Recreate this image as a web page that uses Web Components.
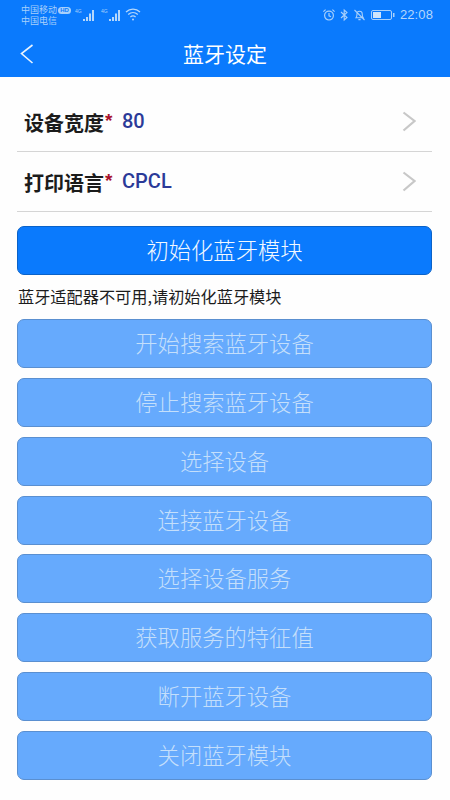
<!DOCTYPE html>
<html lang="zh"><head><meta charset="utf-8">
<style>
html,body{margin:0;padding:0;background:#fefefe;}
body{width:450px;height:800px;overflow:hidden;font-family:"Noto Sans CJK SC","Liberation Sans",sans-serif;}
</style></head><body>
<app-page>
  <app-header title-text="蓝牙设定"></app-header>
  <main-body>
    <form-row label="设备宽度" value="80"></form-row>
    <form-row label="打印语言" value="CPCL"></form-row>
    <action-button primary>初始化蓝牙模块</action-button>
    <status-note>蓝牙适配器不可用,请初始化蓝牙模块</status-note>
    <action-button>开始搜索蓝牙设备</action-button>
    <action-button>停止搜索蓝牙设备</action-button>
    <action-button>选择设备</action-button>
    <action-button>连接蓝牙设备</action-button>
    <action-button>选择设备服务</action-button>
    <action-button>获取服务的特征值</action-button>
    <action-button>断开蓝牙设备</action-button>
    <action-button>关闭蓝牙模块</action-button>
  </main-body>
</app-page>
<script>
function def(name, html, setup){
  customElements.define(name, class extends HTMLElement{
    constructor(){super();this.attachShadow({mode:'open'}).innerHTML=html;}
    connectedCallback(){ if(setup) setup(this,this.shadowRoot); }
  });
}
const bars=`<g fill="#b5d7fb"><rect x="8" y="12" width="2" height="2"/><rect x="11" y="10" width="2" height="4"/><rect x="14" y="6.500" width="2" height="7.500"/><rect x="17" y="3" width="2" height="11"/></g>`;
def('app-page',`<style>:host{display:flex;flex-direction:column;width:450px;height:800px}</style><slot></slot>`);
def('main-body',`<style>:host{display:flex;flex-direction:column;padding:15px 18px 0 17px}</style><slot></slot>`);
def('app-header',`<style>
:host{display:flex;flex-direction:column;height:77px;background:#0a7afd;color:#fff;flex:none}
.status{height:28px;display:flex;align-items:flex-start;justify-content:space-between;padding:3px 17px 0 21px;color:#a8d0fb;font-size:9px;line-height:11px;box-sizing:border-box}
.left,.right{display:flex;align-items:center}
.carrier{display:flex;flex-direction:column;width:37px;padding-top:2px;white-space:nowrap;font-family:"Liberation Sans","Noto Sans CJK SC",sans-serif}
.hd{font:bold 6px/7px "Liberation Sans",sans-serif;background:#a8d0fb;color:#0a7afd;border-radius:4px;height:7px;width:13px;text-align:center;align-self:flex-start;margin-top:4px}
.left svg{margin-top:-2px}
.time{font:13px/16px "Liberation Sans",Arial,sans-serif;color:#b5d7fb;margin-left:5px;letter-spacing:.1px}
.right{margin-top:4px;height:16px}
.nav{flex:1;position:relative;display:flex;align-items:center;justify-content:center}
.title{font-size:21px;line-height:28px}
.back{position:absolute;left:19px;top:15px}
svg{display:block}
</style>
<div class="status">
 <div class="left">
  <div class="carrier"><span>中国移动</span><span>中国电信</span></div>
  <span class="hd">HD</span>
  <svg width="26" height="14" viewBox="0 0 26 14" style="margin-left:4px"><text x="0" y="6" font-size="5" fill="#a8d0fb" font-family="Liberation Sans">4G</text>${bars}</svg>
  <svg width="24" height="14" viewBox="0 0 24 14"><text x="0" y="6" font-size="5" fill="#a8d0fb" font-family="Liberation Sans">4G</text>${bars}</svg>
  <svg width="16" height="14" viewBox="0 0 16 14" fill="none" stroke="#b5d7fb" stroke-width="1.300"><path d="M1 5C5 1.200 11 1.200 15 5M3.200 7.500C6 5 10 5 12.800 7.500M5.400 10C7 8.700 9 8.700 10.600 10"/><circle cx="8" cy="12.500" r="1" fill="#b5d7fb" stroke="none"/></svg>
 </div>
 <div class="right">
  <svg width="14" height="14" viewBox="0 0 14 14" fill="none" stroke="#a8d0fb" stroke-width="1.200" style="margin-right:4px"><circle cx="7" cy="7.600" r="4.400"/><path d="M7 5v2.800l2 1M1.400 3.600L3.600 1.600M12.600 3.600L10.400 1.600"/></svg>
  <svg width="9" height="14" viewBox="0 0 9 14" fill="none" stroke="#a8d0fb" stroke-width="1.100" style="margin-right:4px"><path d="M1 4l6 5.500L4.200 12V2L7 4.500 1 10"/></svg>
  <svg width="13" height="14" viewBox="0 0 13 14" fill="none" stroke="#a8d0fb" stroke-width="1.100" style="margin-right:5px"><path d="M3 9.800c1-1.200 1-2.400 1-4a2.600 2.600 0 0 1 5.200 0c0 1.600 0 2.800 1 4zM5.400 11.600h2.200M1.500 2l10 10"/></svg>
  <svg width="24" height="10" viewBox="0 0 24 10"><rect x=".5" y=".5" width="20" height="9" rx="1.500" fill="none" stroke="#a8d0fb"/><rect x="2" y="2" width="8" height="6" fill="#cfe4fb"/><rect x="22" y="3" width="1.500" height="4" fill="#a8d0fb"/></svg>
  <span class="time">22:08</span>
 </div>
</div>
<div class="nav">
 <svg class="back" width="16" height="22" viewBox="0 0 16 22" fill="none" stroke="#e8f3fe" stroke-width="1.600"><path d="M13.500 2L2.500 10.500 13.500 20"/></svg>
 <span class="title"></span>
</div>`,(h,s)=>{s.querySelector('.title').textContent=h.getAttribute('title-text');});
def('form-row',`<style>
:host{display:flex;align-items:center;height:60px;box-sizing:border-box;border-bottom:1px solid #d5d5d5;padding:0 16px 0 7px}
.label{font-weight:700;font-size:20px;color:#1b1b1b;line-height:24px;width:98px;white-space:nowrap;display:flex;margin-top:3px}
.star{color:#a8122c;font:bold 19px/20px "Liberation Sans",sans-serif;margin-left:1px}
.value{font:500 20px/24px Roboto,"Liberation Sans",sans-serif;color:#2b3a98;flex:1;margin-top:-1px}
</style><span class="label"><span class="text"></span><span class="star">*</span></span><span class="value"></span>
<svg width="14" height="22" viewBox="0 0 14 22" fill="none" stroke="#c8c8c8" stroke-width="2.200"><path d="M1.500 1.500L12.500 10 1.500 19.500"/></svg>`,(h,s)=>{
 s.querySelector('.text').textContent=h.getAttribute('label');
 s.querySelector('.value').textContent=h.getAttribute('value');});
def('action-button',`<style>
:host{display:flex;align-items:center;justify-content:center;height:49px;box-sizing:border-box;padding-bottom:3px;margin-bottom:9.860px;flex:none;border-radius:7px;background:#66aafd;border:1px solid #5a8fd0;color:#c4dffb;font-size:22.300px;font-weight:300}
:host([primary]){background:#0a7afd;border-color:#0a62c8;color:#f2f8ff;margin-top:14px;margin-bottom:0}
span{line-height:30px}
</style><span><slot></slot></span>`);
def('status-note',`<style>
:host{display:block;font-size:16.200px;line-height:20px;color:#1c1c1c;height:20px;margin:11px 0 13px 1px;white-space:nowrap}
</style><slot></slot>`);
</script>
</body></html>
